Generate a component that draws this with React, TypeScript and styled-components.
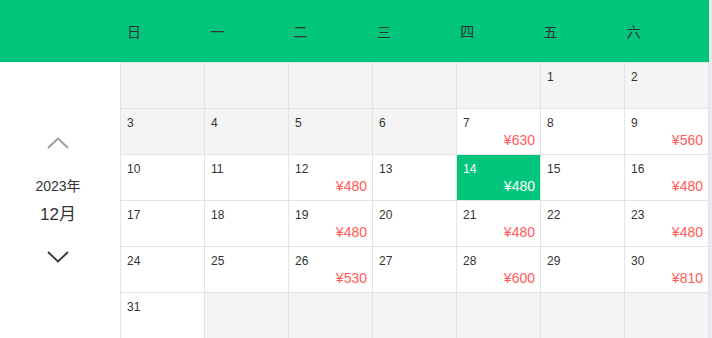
import React from 'react';
import styled, { createGlobalStyle } from 'styled-components';

const GlobalStyle = createGlobalStyle`
  html, body {
    margin: 0;
    padding: 0;
    background: #ffffff;
    font-family: "Liberation Sans", Arial, "Noto Sans CJK SC", sans-serif;
    color: #333333;
  }
  * {
    box-sizing: border-box;
  }
`;

const Page = styled.div`
  display: flex;
  width: 712px;
  height: 338px;
  overflow: hidden;
`;

const Main = styled.div`
  width: 709px;
  display: flex;
  flex-direction: column;
`;

const ScrollTrack = styled.div`
  flex: 1;
  background: #ebebef;
`;

const WeekHeader = styled.div`
  height: 62px;
  background: #00c57a;
  display: grid;
  grid-template-columns: repeat(7, 83.3px);
  padding-left: 120px;
  align-items: center;
`;

const WeekLabel = styled.div`
  padding-left: 7px;
  font-size: 14px;
  color: #333333;
  font-family: "Noto Sans CJK SC", "Liberation Sans", sans-serif;
`;

const Body = styled.div`
  flex: 1;
  display: flex;
`;

const Sidebar = styled.div`
  width: 120px;
  padding-right: 4px;
  display: flex;
  flex-direction: column;
  align-items: center;
  justify-content: center;
`;

const ArrowButton = styled.button`
  border: none;
  background: none;
  padding: 0;
  display: flex;
  cursor: pointer;
`;

const YearText = styled.div`
  margin-top: 29px;
  font-size: 14px;
  line-height: 16px;
`;

const MonthText = styled.div`
  margin-top: 11px;
  font-size: 17px;
  line-height: 20px;
  margin-bottom: 26px;
`;

const Grid = styled.div`
  flex: 1;
  display: grid;
  grid-template-columns: repeat(7, 84px);
  grid-auto-rows: 46px;
  border-left: 1px solid #e4e4e4;
`;

type Tone = 'open' | 'muted' | 'active';

const Cell = styled.div<{ $tone: Tone }>`
  border-top: 1px solid #e4e4e4;
  border-right: 1px solid #e4e4e4;
  background: ${(p) => (p.$tone === 'active' ? '#00c57a' : p.$tone === 'muted' ? '#f4f4f4' : '#ffffff')};
  color: ${(p) => (p.$tone === 'active' ? '#ffffff' : '#333333')};
  padding: 7px 5px 6px 6px;
  display: flex;
  flex-direction: column;
  justify-content: space-between;
`;

const DayNum = styled.div`
  font-size: 12px;
  line-height: 14px;
`;

const Price = styled.div<{ $active: boolean }>`
  align-self: flex-end;
  font-size: 14px;
  line-height: 16px;
  color: ${(p) => (p.$active ? '#ffffff' : '#ff5a5a')};
`;

const Chevron = ({ dir, color }: { dir: 'up' | 'down'; color: string }) => (
  <svg width="22" height="12" viewBox="0 0 22 12">
    <polyline
      points={dir === 'up' ? '1,11 11,1.5 21,11' : '1,1 11,10.5 21,1'}
      fill="none"
      stroke={color}
      strokeWidth="1.8"
    />
  </svg>
);

const weekDays = ['日', '一', '二', '三', '四', '五', '六'];

const prices: Record<number, number> = {
  7: 630,
  9: 560,
  12: 480,
  14: 480,
  16: 480,
  19: 480,
  21: 480,
  23: 480,
  26: 530,
  28: 600,
  30: 810,
};

const firstWeekday = 5; // 2023-12-01 is Friday
const daysInMonth = 31;
const today = 7;
const selected = 14;

export default function App() {
  const cells: (number | null)[] = [];
  for (let i = 0; i < firstWeekday; i++) cells.push(null);
  for (let d = 1; d <= daysInMonth; d++) cells.push(d);
  while (cells.length < 42) cells.push(null);

  return (
    <>
      <GlobalStyle />
      <Page>
        <Main>
          <WeekHeader>
            {weekDays.map((w) => (
              <WeekLabel key={w}>{w}</WeekLabel>
            ))}
          </WeekHeader>
          <Body>
            <Sidebar>
              <ArrowButton>
                <Chevron dir="up" color="#9a9a9a" />
              </ArrowButton>
              <YearText>2023年</YearText>
              <MonthText>12月</MonthText>
              <ArrowButton>
                <Chevron dir="down" color="#333333" />
              </ArrowButton>
            </Sidebar>
            <Grid>
              {cells.map((d, i) => {
                const tone: Tone =
                  d === null || d < today ? 'muted' : d === selected ? 'active' : 'open';
                return (
                  <Cell key={i} $tone={tone}>
                    <DayNum>{d ?? ''}</DayNum>
                    {d !== null && prices[d] && (
                      <Price $active={d === selected}>¥{prices[d]}</Price>
                    )}
                  </Cell>
                );
              })}
            </Grid>
          </Body>
        </Main>
        <ScrollTrack />
      </Page>
    </>
  );
}
